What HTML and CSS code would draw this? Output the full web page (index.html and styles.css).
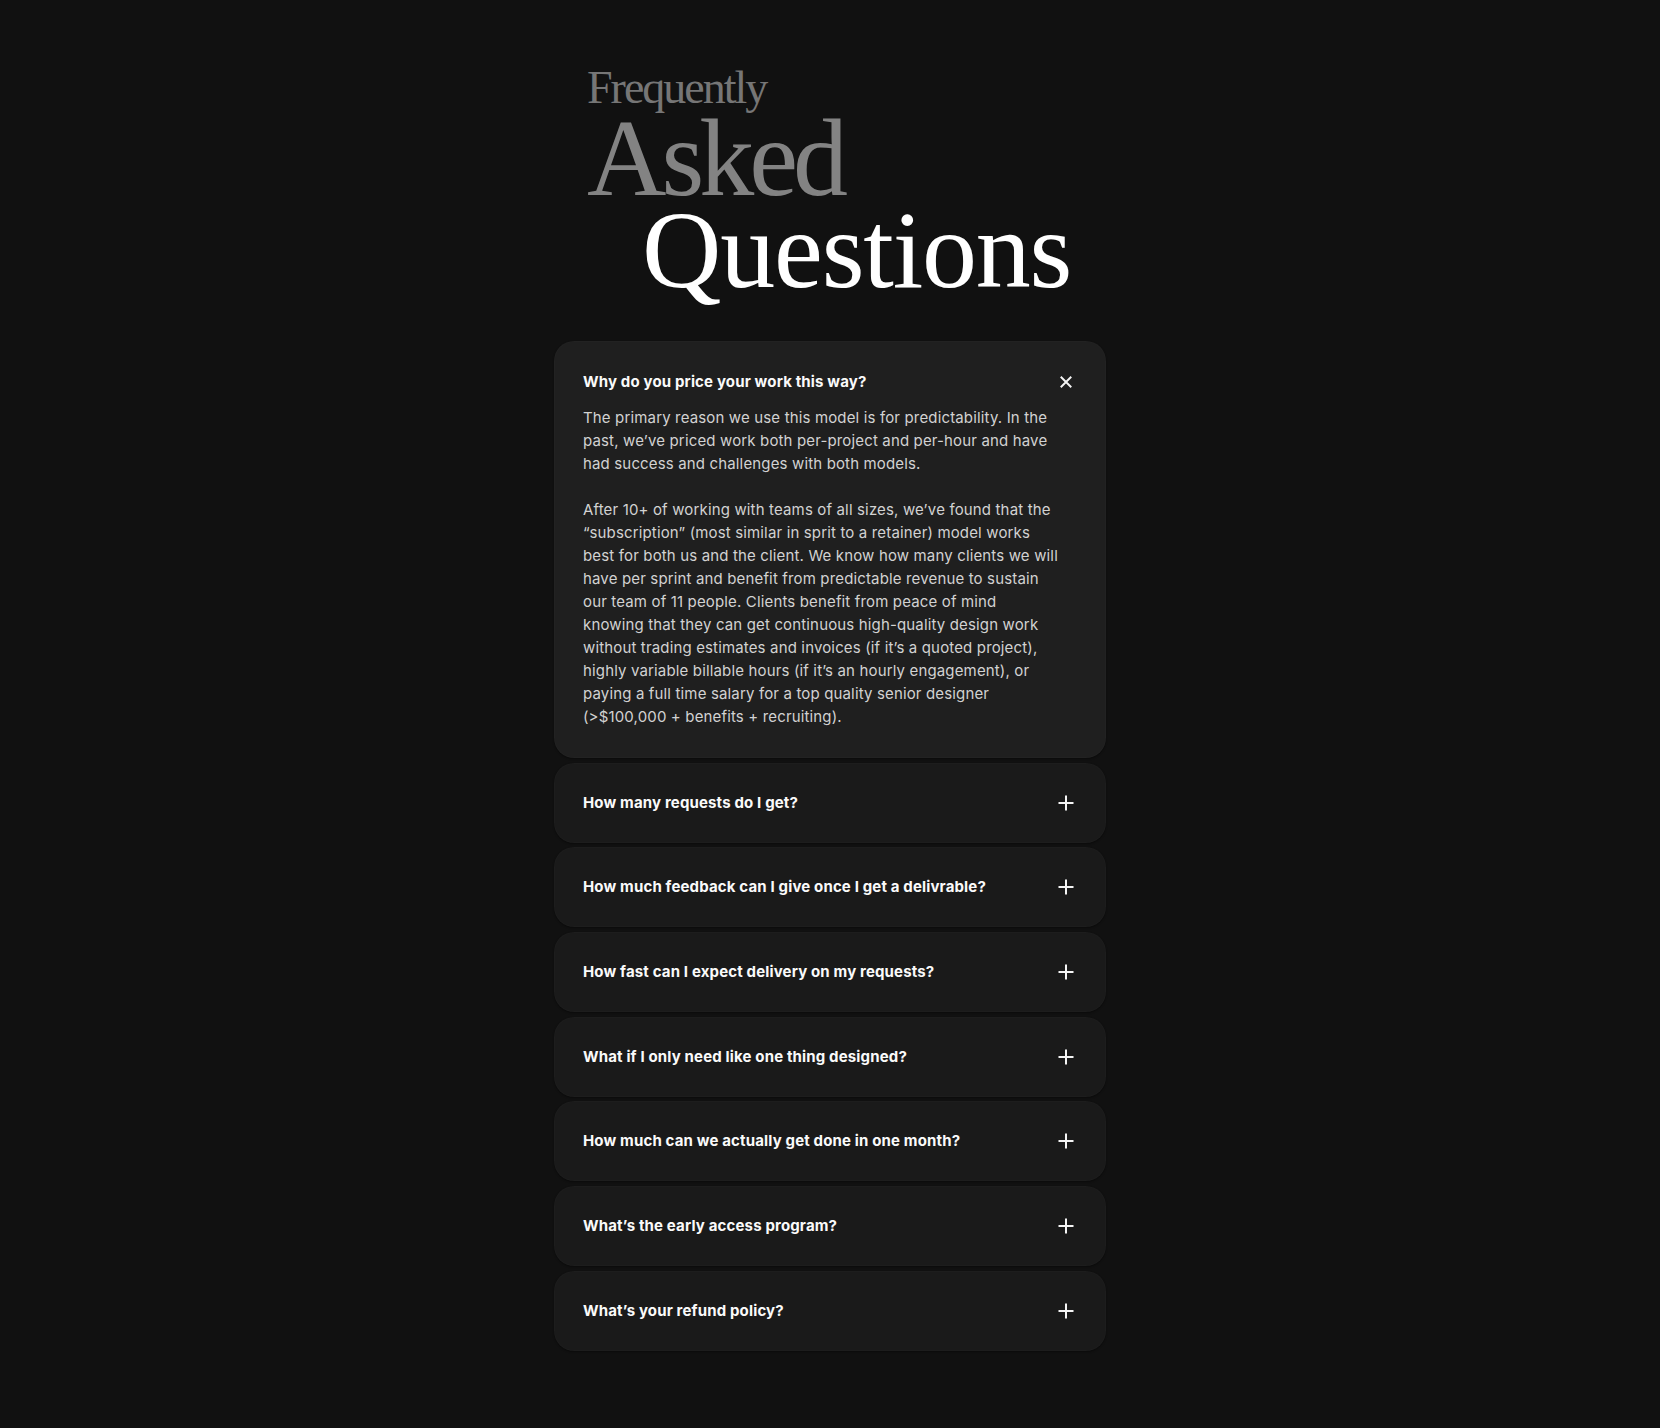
FILE: index.html
```html
<!DOCTYPE html>
<html lang="en">
<head>
<meta charset="utf-8">
<title>FAQ</title>
<link rel="stylesheet" href="styles.css">
</head>
<body>
<main class="faq">
  <h2 class="faq-title">
    <span class="faq-title__line faq-title__line--small">Frequently</span>
    <span class="faq-title__line faq-title__line--muted">Asked</span>
    <span class="faq-title__line faq-title__line--bright">Questions</span>
  </h2>

  <div class="faq-list">
    <div class="faq-item is-open">
      <div class="faq-q">
        <span class="faq-q__text">Why do you price your work this way?</span>
        <svg class="faq-icon faq-icon--close" viewBox="0 0 16 16" aria-hidden="true"><path d="M2 2L14 14M14 2L2 14"/></svg>
      </div>
      <div class="faq-a">
        <p>The primary reason we use this model is for predictability. In the past, we’ve priced work both per-project and per-hour and have had success and challenges with both models.</p>
        <p>After 10+ of working with teams of all sizes, we’ve found that the “subscription” (most similar in sprit to a retainer) model works best for both us and the client. We know how many clients we will have per sprint and benefit from predictable revenue to sustain our team of 11 people. Clients benefit from peace of mind knowing that they can get continuous high-quality design work without trading estimates and invoices (if it’s a quoted project), highly variable billable hours (if it’s an hourly engagement), or paying a full time salary for a top quality senior designer (&gt;$100,000 + benefits + recruiting).</p>
      </div>
    </div>

    <div class="faq-item">
      <div class="faq-q">
        <span class="faq-q__text">How many requests do I get?</span>
        <svg class="faq-icon" viewBox="0 0 16 16" aria-hidden="true"><path d="M8 0.5V15.5M0.5 8H15.5"/></svg>
      </div>
    </div>

    <div class="faq-item">
      <div class="faq-q">
        <span class="faq-q__text">How much feedback can I give once I get a delivrable?</span>
        <svg class="faq-icon" viewBox="0 0 16 16" aria-hidden="true"><path d="M8 0.5V15.5M0.5 8H15.5"/></svg>
      </div>
    </div>

    <div class="faq-item">
      <div class="faq-q">
        <span class="faq-q__text">How fast can I expect delivery on my requests?</span>
        <svg class="faq-icon" viewBox="0 0 16 16" aria-hidden="true"><path d="M8 0.5V15.5M0.5 8H15.5"/></svg>
      </div>
    </div>

    <div class="faq-item">
      <div class="faq-q">
        <span class="faq-q__text">What if I only need like one thing designed?</span>
        <svg class="faq-icon" viewBox="0 0 16 16" aria-hidden="true"><path d="M8 0.5V15.5M0.5 8H15.5"/></svg>
      </div>
    </div>

    <div class="faq-item">
      <div class="faq-q">
        <span class="faq-q__text">How much can we actually get done in one month?</span>
        <svg class="faq-icon" viewBox="0 0 16 16" aria-hidden="true"><path d="M8 0.5V15.5M0.5 8H15.5"/></svg>
      </div>
    </div>

    <div class="faq-item">
      <div class="faq-q">
        <span class="faq-q__text">What’s the early access program?</span>
        <svg class="faq-icon" viewBox="0 0 16 16" aria-hidden="true"><path d="M8 0.5V15.5M0.5 8H15.5"/></svg>
      </div>
    </div>

    <div class="faq-item">
      <div class="faq-q">
        <span class="faq-q__text">What’s your refund policy?</span>
        <svg class="faq-icon" viewBox="0 0 16 16" aria-hidden="true"><path d="M8 0.5V15.5M0.5 8H15.5"/></svg>
      </div>
    </div>
  </div>
</main>
</body>
</html>
```

FILE: styles.css
```css
html, body {
  margin: 0;
  padding: 0;
  background: #111111;
}

body {
  font-family: Inter, "Noto Sans", "Liberation Sans", sans-serif;
  color: #f5f5f5;
  -webkit-font-smoothing: antialiased;
}

.faq {
  width: 552px;
  margin: 0 auto;
  padding: 64px 0 77px;
}

/* Stacked serif heading */
.faq-title {
  margin: 0 0 45px;
  padding-left: 33px;
  font-family: "Liberation Serif", "DejaVu Serif", serif;
  font-weight: 400;
}

.faq-title__line {
  display: block;
  white-space: nowrap;
}

.faq-title__line--small {
  font-size: 46px;
  line-height: 48px;
  color: #767676;
  letter-spacing: -2px;
}

.faq-title__line--muted {
  font-size: 110px;
  line-height: 92px;
  color: #838383;
  letter-spacing: -5px;
}

.faq-title__line--bright {
  font-size: 110px;
  line-height: 92px;
  color: #ffffff;
  padding-left: 55px;
  letter-spacing: -1.2px;
}

/* Accordion */
.faq-list {
  display: flex;
  flex-direction: column;
  gap: 4.7px;
}

.faq-item {
  background: #1a1a1a;
  border-radius: 20px;
  padding: 0 32px 0 29px;
  box-shadow: inset 0 0 0 1px rgba(255, 255, 255, 0.015), 0 1px 2px rgba(0, 0, 0, 0.4);
}

.faq-q {
  display: flex;
  align-items: center;
  justify-content: space-between;
  height: 80px;
}

.faq-q__text {
  font-size: 15px;
  font-weight: 700;
  line-height: 24px;
  letter-spacing: 0.15px;
  color: #fafafa;
}

.faq-icon {
  flex: none;
  width: 16px;
  height: 16px;
  fill: none;
  stroke: #f5f5f5;
  stroke-width: 2;
}

.faq-item.is-open {
  background: #1f1f1f;
  padding-top: 29px;
  padding-bottom: 30px;
}

.faq-item.is-open .faq-q {
  height: 24px;
}

.faq-icon--close {
  width: 14px;
  height: 14px;
  margin-right: 1px;
  stroke-width: 2.2;
}

.faq-a {
  margin-top: 12px;
  max-width: 477px;
}

.faq-a p {
  margin: 0;
  font-size: 15px;
  line-height: 23px;
  letter-spacing: 0.15px;
  color: #d2d2d2;
}

.faq-a p + p {
  margin-top: 23px;
}
```
